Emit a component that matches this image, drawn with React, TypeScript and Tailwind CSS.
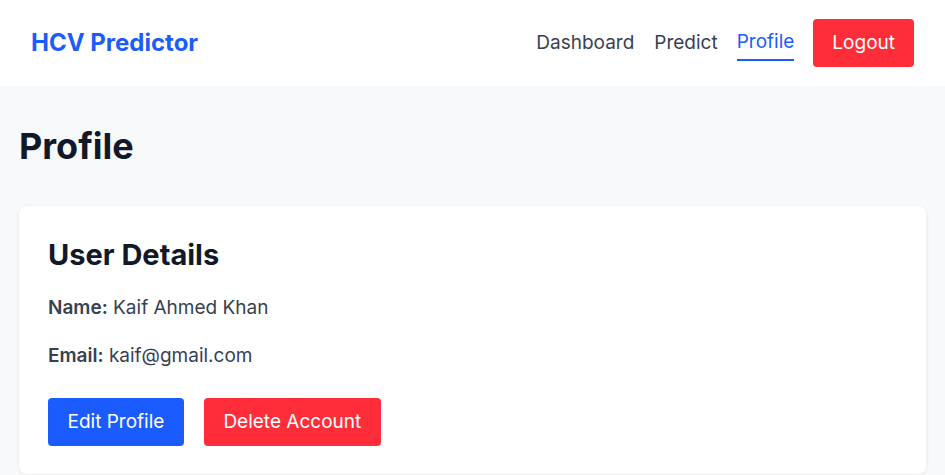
export default function App() {
  return (
    <div className="min-h-[475px] bg-[#f8f9fb]" style={{ fontFamily: "Inter, 'Noto Sans', sans-serif" }}>
      <nav className="h-[86px] bg-white flex items-center justify-between pl-[31px] pr-[31px]">
        <div className="text-[24px] font-bold text-[#1a5cff]">HCV Predictor</div>
        <div className="flex items-center">
          <a className="text-[19px] text-[#374151] mr-[20px]">Dashboard</a>
          <a className="text-[19px] text-[#374151] mr-[19px]">Predict</a>
          <a className="text-[19px] text-[#1a5cff] mr-[19px] border-b-2 border-[#1a5cff] pb-[3px] mt-[3px]">Profile</a>
          <button className="h-[48px] px-[19px] rounded-[4px] bg-[#ff2d3a] text-white text-[19px]">Logout</button>
        </div>
      </nav>
      <main className="px-[19px] pt-[40px]">
        <h1 className="text-[36px] font-bold text-[#111827] leading-[40px] mb-[40px]">Profile</h1>
        <div className="bg-white rounded-[8px] shadow-[0_1px_4px_rgba(0,0,0,0.08)] px-[29px] pt-[32px] pb-[28px]">
          <h2 className="text-[29px] font-bold text-[#111827] leading-[34px] mb-[22px]">User Details</h2>
          <p className="text-[19px] text-[#374151] mb-[20px] leading-[28px]"><span className="font-semibold">Name:</span> Kaif Ahmed Khan</p>
          <p className="text-[19px] text-[#374151] mb-[28px] leading-[28px]"><span className="font-semibold">Email:</span> kaif@gmail.com</p>
          <div className="flex gap-[20px]">
            <button className="h-[48px] px-[19.5px] rounded-[4px] bg-[#1a5cff] text-white text-[19px]">Edit Profile</button>
            <button className="h-[48px] px-[19.5px] rounded-[4px] bg-[#ff2d3a] text-white text-[19px]">Delete Account</button>
          </div>
        </div>
      </main>
    </div>
  );
}
